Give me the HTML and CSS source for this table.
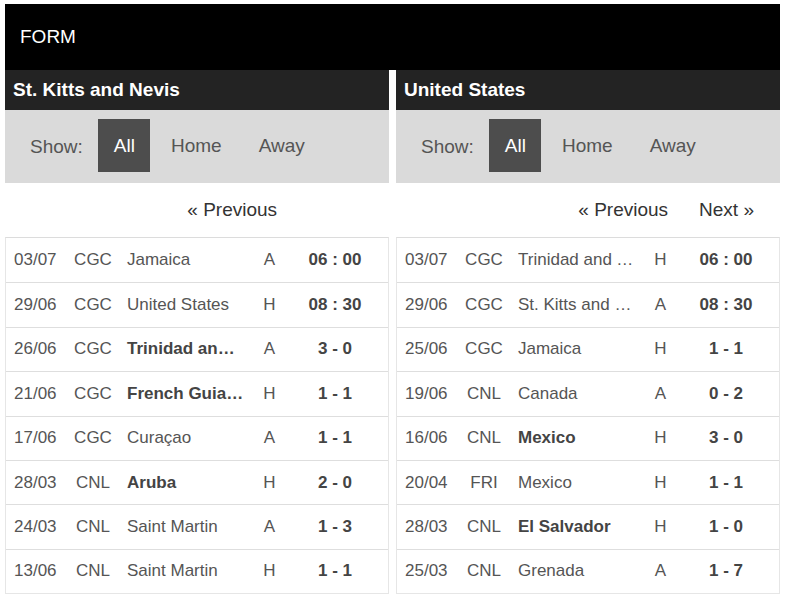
FILE: index.html
```html
<!DOCTYPE html>
<html>
<head>
<meta charset="utf-8">
<link rel="stylesheet" href="styles.css">
</head>
<body>
<div class="page">
  <div class="form-title">FORM</div>
  <div class="panels">
    <section class="panel">
      <div class="team-head">St. Kitts and Nevis</div>
      <div class="show-bar">
        <span class="show-label">Show:</span>
        <span class="filter active">All</span>
        <span class="filter">Home</span>
        <span class="filter">Away</span>
      </div>
      <div class="pager">
        <span class="pager-link">« Previous</span>
        <span class="pager-link hidden">Next »</span>
      </div>
      <div class="matches">
        <div class="row"><span class="date">03/07</span><span class="comp">CGC</span><span class="team">Jamaica</span><span class="ha">A</span><span class="score">06 : 00</span></div>
        <div class="row"><span class="date">29/06</span><span class="comp">CGC</span><span class="team">United States</span><span class="ha">H</span><span class="score">08 : 30</span></div>
        <div class="row"><span class="date">26/06</span><span class="comp">CGC</span><span class="team win">Trinidad and Tobago</span><span class="ha">A</span><span class="score">3 - 0</span></div>
        <div class="row"><span class="date">21/06</span><span class="comp">CGC</span><span class="team win">French Guiana</span><span class="ha">H</span><span class="score">1 - 1</span></div>
        <div class="row"><span class="date">17/06</span><span class="comp">CGC</span><span class="team">Curaçao</span><span class="ha">A</span><span class="score">1 - 1</span></div>
        <div class="row"><span class="date">28/03</span><span class="comp">CNL</span><span class="team win">Aruba</span><span class="ha">H</span><span class="score">2 - 0</span></div>
        <div class="row"><span class="date">24/03</span><span class="comp">CNL</span><span class="team">Saint Martin</span><span class="ha">A</span><span class="score">1 - 3</span></div>
        <div class="row"><span class="date">13/06</span><span class="comp">CNL</span><span class="team">Saint Martin</span><span class="ha">H</span><span class="score">1 - 1</span></div>
      </div>
    </section>
    <section class="panel">
      <div class="team-head">United States</div>
      <div class="show-bar">
        <span class="show-label">Show:</span>
        <span class="filter active">All</span>
        <span class="filter">Home</span>
        <span class="filter">Away</span>
      </div>
      <div class="pager">
        <span class="pager-link">« Previous</span>
        <span class="pager-link">Next »</span>
      </div>
      <div class="matches">
        <div class="row"><span class="date">03/07</span><span class="comp">CGC</span><span class="team">Trinidad and Tobago</span><span class="ha">H</span><span class="score">06 : 00</span></div>
        <div class="row"><span class="date">29/06</span><span class="comp">CGC</span><span class="team">St. Kitts and Nevis</span><span class="ha">A</span><span class="score">08 : 30</span></div>
        <div class="row"><span class="date">25/06</span><span class="comp">CGC</span><span class="team">Jamaica</span><span class="ha">H</span><span class="score">1 - 1</span></div>
        <div class="row"><span class="date">19/06</span><span class="comp">CNL</span><span class="team">Canada</span><span class="ha">A</span><span class="score">0 - 2</span></div>
        <div class="row"><span class="date">16/06</span><span class="comp">CNL</span><span class="team win">Mexico</span><span class="ha">H</span><span class="score">3 - 0</span></div>
        <div class="row"><span class="date">20/04</span><span class="comp">FRI</span><span class="team">Mexico</span><span class="ha">H</span><span class="score">1 - 1</span></div>
        <div class="row"><span class="date">28/03</span><span class="comp">CNL</span><span class="team win">El Salvador</span><span class="ha">H</span><span class="score">1 - 0</span></div>
        <div class="row"><span class="date">25/03</span><span class="comp">CNL</span><span class="team">Grenada</span><span class="ha">A</span><span class="score">1 - 7</span></div>
      </div>
    </section>
  </div>
</div>
</body>
</html>
```

FILE: styles.css
```css
* { box-sizing: border-box; }
body {
  margin: 0;
  background: #fff;
  font-family: "Liberation Sans", Arial, sans-serif;
}
.page {
  width: 775px;
  margin: 4px 0 0 5px;
}
.form-title {
  height: 66px;
  background: #000;
  color: #fff;
  font-size: 19px;
  line-height: 66px;
  padding-left: 15px;
}
.panels {
  display: flex;
  gap: 7px;
}
.panel {
  width: 384px;
}
.team-head {
  height: 40px;
  background: #232323;
  color: #fff;
  font-size: 19px;
  font-weight: bold;
  line-height: 40px;
  padding-left: 8px;
}
.show-bar {
  height: 73px;
  background: #dadada;
  display: flex;
  align-items: center;
  padding-left: 25px;
  font-size: 19px;
  color: #555;
}
.show-label {
  margin-right: 15px;
}
.filter {
  height: 53px;
  line-height: 53px;
  padding: 0 16px;
  margin-right: 5px;
  margin-top: -2px;
}
.filter.active {
  background: #4d4d4d;
  color: #fff;
  padding: 0 15px 0 16px;
}
.pager {
  height: 54px;
  display: flex;
  justify-content: flex-end;
  align-items: center;
  gap: 31px;
  padding-right: 26px;
  font-size: 19px;
  color: #333;
}
.hidden { visibility: hidden; }
.matches {
  border: 1px solid #e6e6e6;
  border-top-color: #dcdcdc;
}
.row {
  display: grid;
  grid-template-columns: 53px 52px 131px 39px 92px;
  align-items: center;
  height: 44.4px;
  padding-left: 8px;
  font-size: 17px;
  color: #555;
  border-top: 1px solid #dedede;
}
.row:first-child { border-top: none; }
.comp, .ha, .score { text-align: center; }
.team {
  padding: 0 6px 0 8px;
  white-space: nowrap;
  overflow: hidden;
  text-overflow: ellipsis;
}
.team.win { font-weight: bold; color: #444; }
.score { font-weight: bold; color: #444; }
```
